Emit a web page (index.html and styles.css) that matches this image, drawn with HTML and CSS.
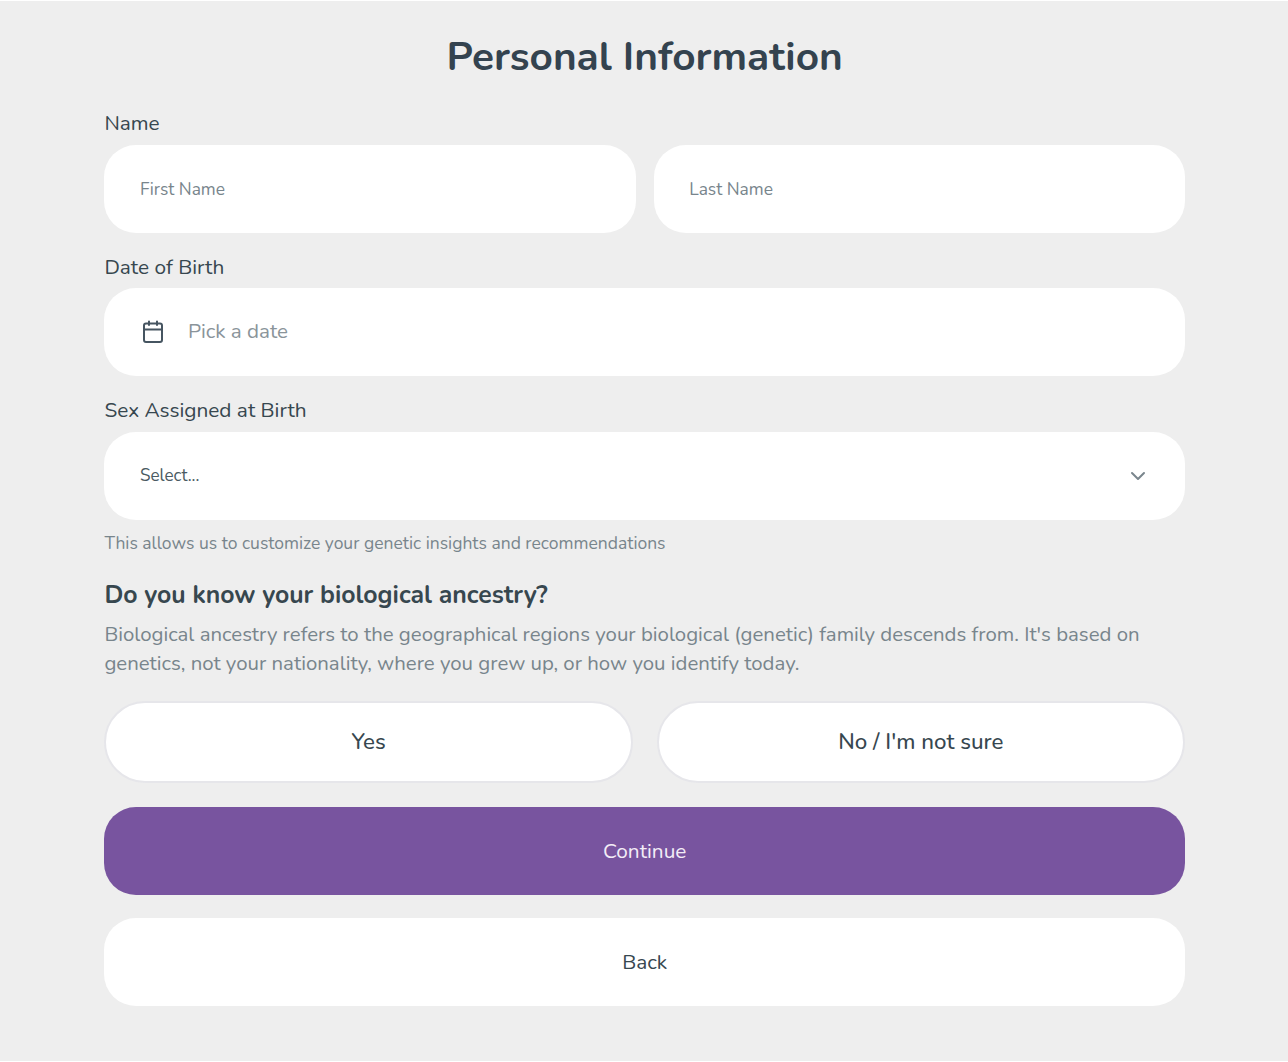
FILE: index.html
```html
<!DOCTYPE html>
<html lang="en">

<head>
    <meta charset="UTF-8">
    <title>Personal Information</title>
    <link rel="stylesheet" href="styles.css">
</head>

<body>
    <div class="container">
        <h1>Personal Information</h1>
        <form>
            <label class="field-label">Name</label>
            <div class="name-row">
                <div class="field"><span class="placeholder">First Name</span></div>
                <div class="field"><span class="placeholder">Last Name</span></div>
            </div>

            <label class="field-label">Date of Birth</label>
            <div class="field date-field">
                <svg class="calendar" width="24" height="24" viewBox="0 0 24 24" fill="none" stroke="#465561" stroke-width="2" stroke-linecap="round" stroke-linejoin="round">
                    <rect x="3" y="3.5" width="18" height="18.5" rx="2"></rect>
                    <path d="M8 1.5v3.5M16 1.5v3.5M3 9.5h18"></path>
                </svg>
                <span class="date-text">Pick a date</span>
            </div>

            <label class="field-label">Sex Assigned at Birth</label>
            <div class="field select-field">
                <span class="select-text">Select...</span>
                <svg width="16" height="16" viewBox="0 0 16 16" fill="none" stroke="#7a868d" stroke-width="2" stroke-linecap="round" stroke-linejoin="round">
                    <path d="M2 5l6 6 6-6"></path>
                </svg>
            </div>
            <p class="hint">This allows us to customize your genetic insights and recommendations</p>

            <h2>Do you know your biological ancestry?</h2>
            <p class="description">Biological ancestry refers to the geographical regions your biological (genetic) family descends from. It's based on genetics, not your nationality, where you grew up, or how you identify today.</p>

            <div class="choice-row">
                <button type="button" class="choice">Yes</button>
                <button type="button" class="choice">No / I'm not sure</button>
            </div>

            <button type="button" class="action continue">Continue</button>
            <button type="button" class="action back">Back</button>
        </form>
    </div>
</body>

</html>
```

FILE: styles.css
```css
* {
    box-sizing: border-box;
}

body {
    margin: 0;
    padding-top: 1px;
    background-color: #fff;
    font-family: "Nunito", "Noto Sans", "Open Sans", sans-serif;
    color: #37474f;
}

.container {
    height: 1060px;
    padding: 30px 103px 0 104.4px;
    background-color: #eee;
}

h1 {
    margin: 0 0 29px;
    font-size: 40.6px;
    line-height: 52px;
    font-weight: 700;
    text-align: center;
    color: #34434f;
}

.field-label {
    display: block;
    height: 22px;
    margin-bottom: 10.5px;
    font-size: 20.8px;
    line-height: 22px;
    color: #37474f;
}

.name-row {
    display: flex;
    gap: 18px;
    margin-bottom: 23px;
}

.name-row .field {
    flex: 1;
    margin-bottom: 0;
}

.field {
    display: flex;
    align-items: center;
    height: 88px;
    margin-bottom: 23px;
    padding: 0 35.5px;
    background-color: #fff;
    border-radius: 32px;
}

.placeholder {
    font-size: 17.4px;
    color: #78858c;
}

.calendar {
    margin-left: 1px;
    margin-right: 23px;
}

.date-text {
    margin-bottom: 2px;
    font-size: 20.6px;
    color: #8a949a;
}

.select-field {
    justify-content: space-between;
    margin-bottom: 11px;
    padding-right: 39px;
}

.select-text {
    font-size: 17.1px;
    color: #4a5a62;
}

.hint {
    margin: 0 0 24px;
    font-size: 17.5px;
    line-height: 24px;
    color: #78858c;
}

h2 {
    margin: 0 0 9px;
    font-size: 24.8px;
    line-height: 32px;
    font-weight: 700;
    color: #37474f;
}

.description {
    margin: 0 0 23px;
    font-size: 20.4px;
    line-height: 29px;
    color: #78858c;
}

.choice-row {
    display: flex;
    gap: 24px;
    margin-bottom: 24px;
}

.choice {
    flex: 1;
    height: 82px;
    background-color: #fff;
    border: 2px solid #e6e6ea;
    border-radius: 41px;
    font-family: inherit;
    font-size: 22.3px;
    font-weight: 500;
    color: #37474f;
}

.action {
    display: block;
    width: 100%;
    height: 88px;
    border: none;
    border-radius: 32px;
    font-family: inherit;
    font-size: 20.8px;
}

.continue {
    margin-bottom: 23px;
    background-color: #78549f;
    color: #f3edf7;
}

.back {
    background-color: #fff;
    color: #37474f;
}
```
